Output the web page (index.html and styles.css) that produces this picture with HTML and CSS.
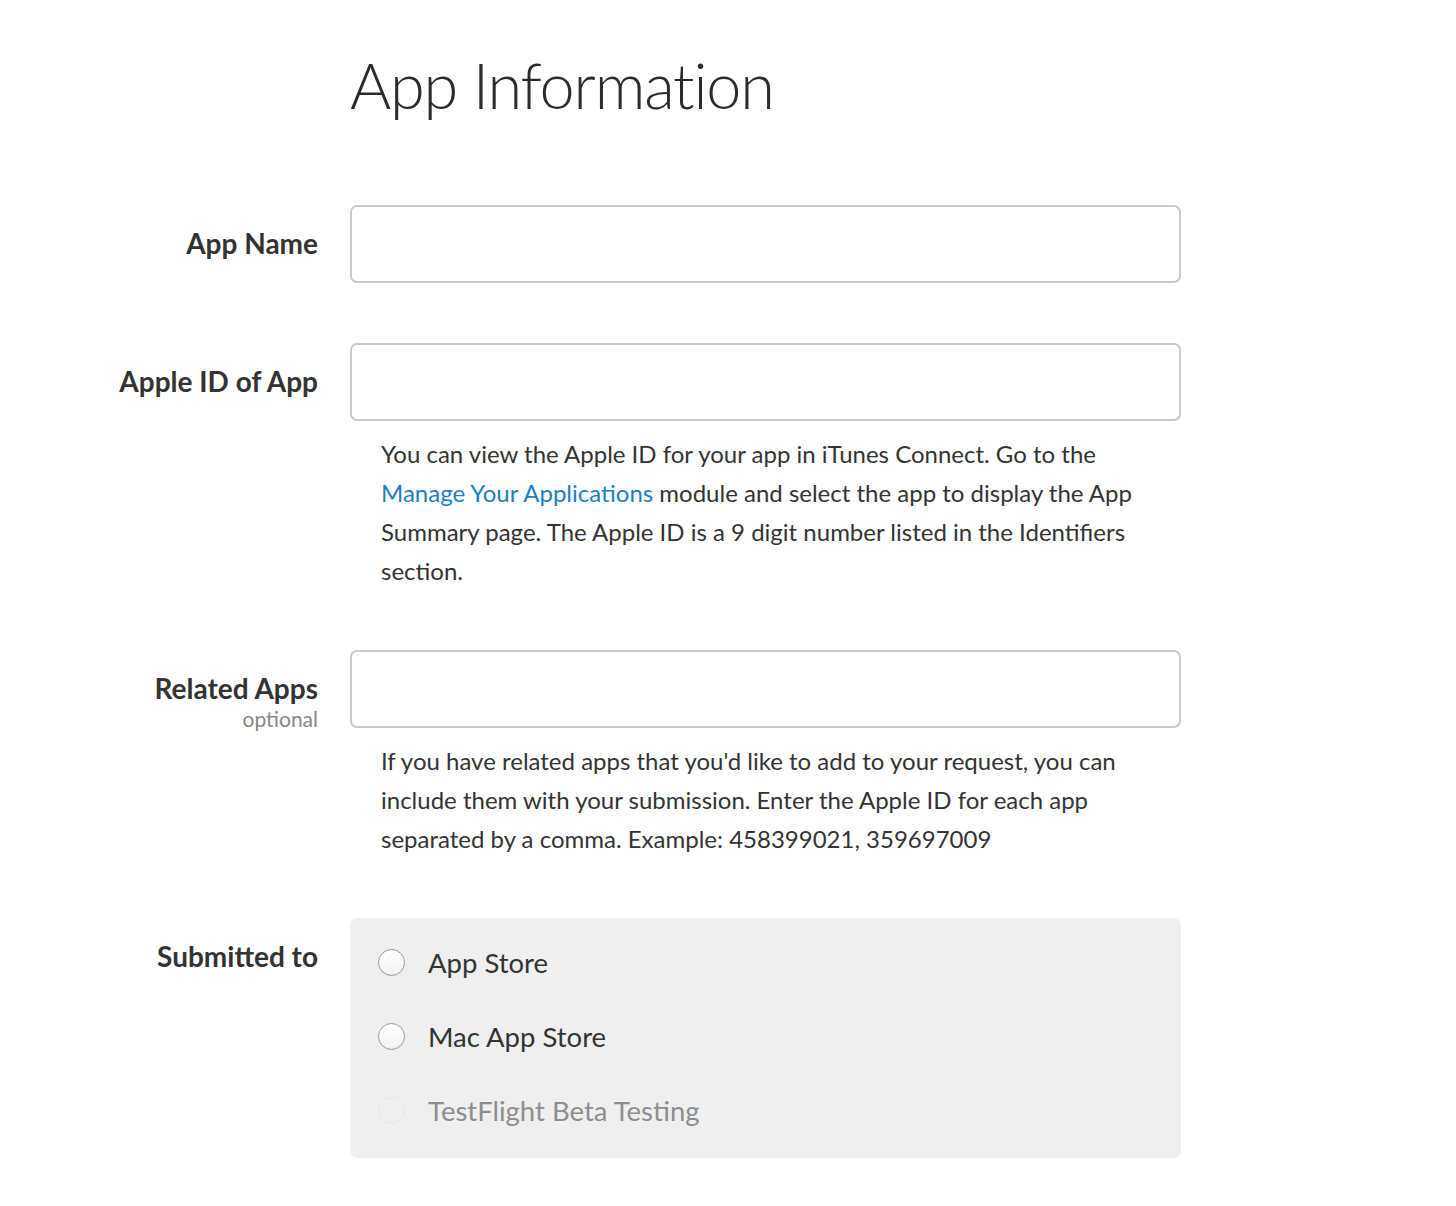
FILE: index.html
```html
<!DOCTYPE html>
<html lang="en">
<head>
  <meta charset="UTF-8">
  <title>App Information</title>
  <link rel="stylesheet" href="styles.css">
</head>
<body>
  <h1 class="title">App Information</h1>

  <form class="app-form">
    <div class="row">
      <label class="row-label" for="app-name">App Name</label>
      <div class="row-field">
        <input class="text-input" id="app-name" type="text">
      </div>
    </div>

    <div class="row">
      <label class="row-label" for="apple-id">Apple ID of App</label>
      <div class="row-field">
        <input class="text-input" id="apple-id" type="text">
        <p class="help">You can view the Apple ID for your app in iTunes Connect. Go to the <a href="#">Manage Your Applications</a> module and select the app to display the App Summary page. The Apple ID is a 9 digit number listed in the Identifiers section.</p>
      </div>
    </div>

    <div class="row">
      <label class="row-label" for="related-apps">Related Apps<span class="optional">optional</span></label>
      <div class="row-field">
        <input class="text-input" id="related-apps" type="text">
        <p class="help">If you have related apps that you'd like to add to your request, you can include them with your submission. Enter the Apple ID for each app separated by a comma. Example: 458399021, 359697009</p>
      </div>
    </div>

    <div class="row">
      <div class="row-label row-label-top">Submitted to</div>
      <div class="row-field">
        <div class="choices">
          <label class="choice">
            <input type="radio" name="store">
            <span class="radio"></span>
            App Store
          </label>
          <label class="choice">
            <input type="radio" name="store">
            <span class="radio"></span>
            Mac App Store
          </label>
          <label class="choice choice-disabled">
            <input type="radio" name="store" disabled>
            <span class="radio"></span>
            TestFlight Beta Testing
          </label>
        </div>
      </div>
    </div>
  </form>
</body>
</html>
```

FILE: styles.css
```css
body {
  margin: 0;
  background: #fff;
  color: #333;
  font-family: Lato, "Open Sans", sans-serif;
}

.title {
  margin: 0;
  padding: 45px 0 0 350px;
  font-size: 63px;
  font-weight: 300;
  line-height: 80px;
  letter-spacing: -1.2px;
  color: #2b2b2b;
}

.app-form {
  padding-top: 80px;
}

.row {
  display: grid;
  grid-template-columns: 318px 831px;
  column-gap: 32px;
  margin-bottom: 60px;
}

.row-label {
  display: flex;
  flex-direction: column;
  align-items: flex-end;
  justify-content: flex-start;
  padding-top: 20px;
  font-size: 28px;
  font-weight: 700;
  line-height: 36px;
  color: #333;
}

.row-label-top {
  padding-top: 20px;
}

.optional {
  font-size: 21px;
  font-weight: 400;
  line-height: 26px;
  color: #888;
}

.text-input {
  display: block;
  box-sizing: border-box;
  width: 100%;
  height: 78px;
  margin: 0;
  border: 2px solid #c9c9c9;
  border-radius: 7px;
  background: #fff;
  font: inherit;
  font-size: 26px;
  padding: 0 20px;
}

.help {
  margin: 13px 0 0;
  padding: 0 20px 0 31px;
  font-size: 24px;
  line-height: 39px;
  color: #333;
}

.help a {
  color: #1b7fc2;
  text-decoration: none;
}

.choices {
  display: flex;
  flex-direction: column;
  gap: 40px;
  padding: 27px 28px 31px;
  border-radius: 7px;
  background: #efefef;
}

.choice {
  display: flex;
  align-items: center;
  gap: 23px;
  height: 34px;
  font-size: 27.5px;
  color: #333;
}

.choice input {
  display: none;
}

.radio {
  flex: none;
  box-sizing: border-box;
  width: 27px;
  height: 27px;
  border: 1px solid #9c9c9c;
  border-radius: 50%;
  background: linear-gradient(#fff, #f4f4f4);
  box-shadow: inset 0 -1px 1px rgba(0, 0, 0, 0.06);
}

.choice-disabled {
  color: #8e8e8e;
}

.choice-disabled .radio {
  border-color: #e6e6e6;
  background: #efefef;
  box-shadow: none;
}
```
